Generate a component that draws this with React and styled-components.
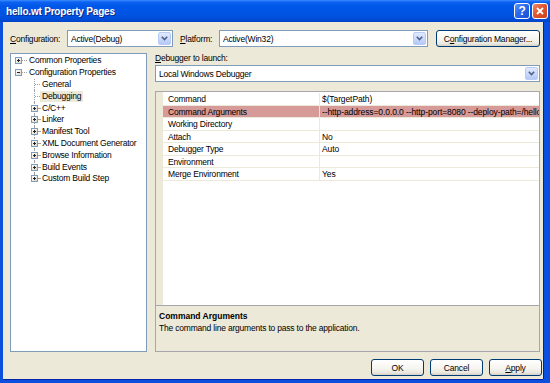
import React from 'react';
import styled, { createGlobalStyle } from 'styled-components';

const GlobalStyle = createGlobalStyle`
  html, body { margin: 0; padding: 0; background: #fff; }
  body { font-family: "Liberation Sans", Arial, sans-serif; }
`;

const Window = styled.div`
  width: 550px;
  height: 383px;
  display: flex;
  flex-direction: column;
  background: #0A4FDD;
  color: #000;
  font-size: 8.5px;
  letter-spacing: -0.2px;
  overflow: hidden;
`;

const TitleBar = styled.div`
  height: 22px;
  flex: none;
  display: flex;
  align-items: center;
  padding: 0 2px 0 6px;
  background: linear-gradient(to bottom, #3C8DFF 0, #0E62F2 2px, #0057E8 6px, #0054E3 14px, #004BD6 20px, #0041C4 22px);
`;

const Title = styled.div`
  flex: 1;
  color: #fff;
  font-weight: bold;
  font-size: 10px;
  letter-spacing: -0.2px;
  text-shadow: 1px 1px 0 #0A2A8A;
`;

const TitleButton = styled.div`
  width: 16px;
  height: 16px;
  margin-left: 2px;
  box-sizing: border-box;
  border: 1px solid #fff;
  border-radius: 3px;
  display: flex;
  align-items: center;
  justify-content: center;
  color: #fff;
  font-weight: bold;
  font-size: 12px;
  background: ${p => p.$close
    ? 'linear-gradient(135deg, #F08A67 0%, #E0572F 45%, #C9401C 100%)'
    : 'linear-gradient(135deg, #5B97FF 0%, #2A68EC 45%, #1B50D0 100%)'};
`;

const Frame = styled.div`
  flex: 1;
  margin: 0 7px 4px 3px;
  background: #ECE9D8;
  box-shadow: 1px 0 0 #0022A8, 0 1px 0 #0022A8;
  display: flex;
  flex-direction: column;
  padding: 8px 3px 0 7px;
`;

const Row = styled.div`
  display: flex;
  align-items: center;
  height: 17px;
`;

const FieldLabel = styled.div`
  width: ${p => p.$w}px;
  flex: none;
  white-space: nowrap;
`;

const Combo = styled.div`
  width: ${p => p.$w ? `${p.$w}px` : 'auto'};
  height: 17px;
  flex: none;
  box-sizing: border-box;
  border: 1px solid #7F9DB9;
  background: #fff;
  display: flex;
  align-items: center;
  padding: 0 1px 0 3px;
`;

const ComboText = styled.div`
  flex: 1;
  white-space: nowrap;
  overflow: hidden;
`;

const ComboArrow = styled.div`
  width: 13px;
  height: 13px;
  box-sizing: border-box;
  border: 1px solid #B9CCF5;
  border-radius: 2px;
  background: linear-gradient(to bottom, #E1EAFE 0%, #C7D7FB 60%, #B3C8F5 100%);
  display: flex;
  align-items: center;
  justify-content: center;
`;

const Button = styled.div`
  width: ${p => p.$w}px;
  height: 17px;
  flex: none;
  box-sizing: border-box;
  border: 1px solid #003C74;
  border-radius: 3px;
  background: linear-gradient(to bottom, #FFFFFF 0%, #F6F5F0 55%, #E9E7DE 85%, #D6D0C5 100%);
  display: flex;
  align-items: center;
  justify-content: center;
  white-space: nowrap;
`;

const Main = styled.div`
  display: flex;
  gap: 8px;
  margin-top: 6px;
  height: 299px;
`;

const TreePanel = styled.div`
  width: 137px;
  flex: none;
  box-sizing: border-box;
  border: 1px solid #7F9DB9;
  background: #fff;
  padding-top: 1px;
`;

const TreeRow = styled.div`
  display: flex;
  align-items: center;
  height: 11.8px;
  padding-left: ${p => p.$indent}px;
`;

const Slot = styled.div`
  position: relative;
  width: 7px;
  height: 100%;
  flex: none;
  display: flex;
  align-items: center;
  &::before {
    content: '';
    display: ${p => (p.$line ? 'block' : 'none')};
    position: absolute;
    left: 3px;
    top: 0;
    bottom: ${p => (p.$last ? '50%' : '0')};
    border-left: 1px dotted #A0A0A0;
  }
`;

const ExpBox = styled.span`
  position: relative;
  z-index: 1;
  width: 7px;
  height: 7px;
  box-sizing: border-box;
  border: 1px solid #7F9DB9;
  background: linear-gradient(to bottom right, #fff, #DDD9C9);
  display: flex;
  align-items: center;
  justify-content: center;
`;

const Dash = styled.span`
  width: ${p => p.$w}px;
  margin-left: ${p => p.$shift || 0}px;
  flex: none;
  height: 0;
  border-top: 1px dotted #A0A0A0;
`;

const TreeLabel = styled.span`
  padding: 0 2px;
  line-height: 11px;
  white-space: nowrap;
  background: ${p => (p.$selected ? '#ECE9D8' : 'transparent')};
`;

const RightCol = styled.div`
  width: 385px;
  flex: none;
  display: flex;
  flex-direction: column;
`;

const DebugLabel = styled.div`
  height: 11px;
  line-height: 11px;
  margin-bottom: 1px;
`;

const Grid = styled.div`
  flex: 1;
  margin-top: 9px;
  box-sizing: border-box;
  border: 1px solid #A7A6AA;
  display: flex;
  flex-direction: column;
`;

const GridBody = styled.div`
  flex: 1;
  display: flex;
`;

const Gutter = styled.div`
  width: 7px;
  flex: none;
  background: #ECE9D8;
`;

const Rows = styled.div`
  flex: 1;
  background: #fff;
  min-width: 0;
  padding-top: 1px;
`;

const PropRow = styled.div`
  display: grid;
  grid-template-columns: 157px 1fr;
  height: 12.5px;
  box-sizing: border-box;
  border-bottom: 1px solid #ECE9D8;
  background: ${p => (p.$active ? '#D69A98' : 'transparent')};
`;

const NameCell = styled.div`
  padding: 1px 0 0 5px;
  line-height: 11.5px;
  border-right: 1px solid #ECE9D8;
  white-space: nowrap;
`;

const ValueCell = styled.div`
  padding: 1px 0 0 2px;
  line-height: 11.5px;
  letter-spacing: -0.1px;
  white-space: nowrap;
  overflow: hidden;
`;

const Desc = styled.div`
  height: 46px;
  flex: none;
  box-sizing: border-box;
  border-top: 1px solid #A7A6AA;
  background: #ECE9D8;
  padding: 4px 3px 0;
  line-height: 12px;
`;

const DescTitle = styled.div`
  font-weight: bold;
  letter-spacing: 0;
`;

const BottomRow = styled.div`
  display: flex;
  justify-content: flex-end;
  gap: 6px;
  margin-top: 7px;
  margin-right: -2px;
`;

const Chevron = () => (
  <svg width="7" height="5" viewBox="0 0 7 5">
    <path d="M0.8 0.8 L3.5 3.5 L6.2 0.8" fill="none" stroke="#4D6185" strokeWidth="1.6" />
  </svg>
);

const PlusMinus = ({ open }) => (
  <svg width="5" height="5" viewBox="0 0 5 5">
    <rect x="1" y="2" width="3" height="1" fill="#222" />
    {!open && <rect x="2" y="1" width="1" height="3" fill="#222" />}
  </svg>
);

const CloseX = () => (
  <svg width="8" height="8" viewBox="0 0 8 8">
    <path d="M1 1 L7 7 M7 1 L1 7" stroke="#fff" strokeWidth="1.8" />
  </svg>
);

const ComboBox = ({ w, children }) => (
  <Combo $w={w}>
    <ComboText>{children}</ComboText>
    <ComboArrow><Chevron /></ComboArrow>
  </Combo>
);

const children = [
  { label: 'General' },
  { label: 'Debugging', selected: true },
  { label: 'C/C++', box: true },
  { label: 'Linker', box: true },
  { label: 'Manifest Tool', box: true },
  { label: 'XML Document Generator', box: true },
  { label: 'Browse Information', box: true },
  { label: 'Build Events', box: true },
  { label: 'Custom Build Step', box: true },
];

const props = [
  ['Command', '$(TargetPath)'],
  ['Command Arguments', '--http-address=0.0.0.0 --http-port=8080 --deploy-path=/hello', true],
  ['Working Directory', ''],
  ['Attach', 'No'],
  ['Debugger Type', 'Auto'],
  ['Environment', ''],
  ['Merge Environment', 'Yes'],
];

const Tree = () => (
  <TreePanel>
    <TreeRow $indent={4}>
      <Slot><ExpBox><PlusMinus /></ExpBox></Slot>
      <Dash $w={5} />
      <TreeLabel>Common Properties</TreeLabel>
    </TreeRow>
    <TreeRow $indent={4}>
      <Slot><ExpBox><PlusMinus open /></ExpBox></Slot>
      <Dash $w={5} />
      <TreeLabel>Configuration Properties</TreeLabel>
    </TreeRow>
    {children.map((c, i) => (
      <TreeRow key={c.label} $indent={20}>
        <Slot $line $last={i === children.length - 1}>
          {c.box && <ExpBox><PlusMinus /></ExpBox>}
        </Slot>
        <Dash $w={c.box ? 2 : 5} $shift={c.box ? 0 : -3} />
        <TreeLabel $selected={c.selected}>{c.label}</TreeLabel>
      </TreeRow>
    ))}
  </TreePanel>
);

export default function App() {
  return (
    <>
      <GlobalStyle />
      <Window>
        <TitleBar>
          <Title>hello.wt Property Pages</Title>
          <TitleButton>?</TitleButton>
          <TitleButton $close><CloseX /></TitleButton>
        </TitleBar>
        <Frame>
          <Row>
            <FieldLabel $w={57}><u>C</u>onfiguration:</FieldLabel>
            <ComboBox w={106}>Active(Debug)</ComboBox>
            <FieldLabel $w={46} style={{ paddingLeft: 7, boxSizing: 'border-box' }}><u>P</u>latform:</FieldLabel>
            <ComboBox w={209}>Active(Win32)</ComboBox>
            <Button $w={104} style={{ marginLeft: 8 }}>C<u>o</u>nfiguration Manager...</Button>
          </Row>
          <Main>
            <Tree />
            <RightCol>
              <DebugLabel><u>D</u>ebugger to launch:</DebugLabel>
              <ComboBox>Local Windows Debugger</ComboBox>
              <Grid>
                <GridBody>
                  <Gutter />
                  <Rows>
                    {props.map(([name, value, active]) => (
                      <PropRow key={name} $active={active}>
                        <NameCell>{name}</NameCell>
                        <ValueCell>{value}</ValueCell>
                      </PropRow>
                    ))}
                  </Rows>
                </GridBody>
                <Desc>
                  <DescTitle>Command Arguments</DescTitle>
                  <div>The command line arguments to pass to the application.</div>
                </Desc>
              </Grid>
            </RightCol>
          </Main>
          <BottomRow>
            <Button $w={53}>OK</Button>
            <Button $w={53}>Cancel</Button>
            <Button $w={53}><u>A</u>pply</Button>
          </BottomRow>
        </Frame>
      </Window>
    </>
  );
}
